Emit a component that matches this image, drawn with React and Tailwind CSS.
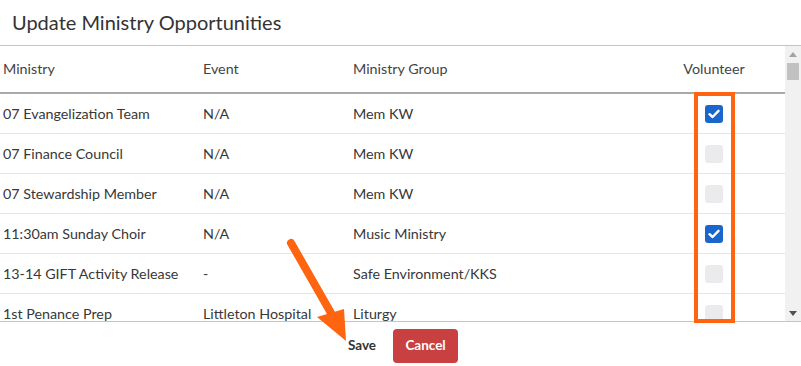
import React from 'react';

const rows = [
  { ministry: "07 Evangelization Team", event: "N/A", group: "Mem KW", checked: true },
  { ministry: "07 Finance Council", event: "N/A", group: "Mem KW", checked: false },
  { ministry: "07 Stewardship Member", event: "N/A", group: "Mem KW", checked: false },
  { ministry: "11:30am Sunday Choir", event: "N/A", group: "Music Ministry", checked: true },
  { ministry: "13-14 GIFT Activity Release", event: "-", group: "Safe Environment/KKS", checked: false },
  { ministry: "1st Penance Prep", event: "Littleton Hospital", group: "Liturgy", checked: false },
];

function Checkbox({ checked }) {
  if (checked) {
    return (
      <div className="w-[18px] h-[18px] rounded-[3px] bg-[#1a66cc] flex items-center justify-center">
        <svg width="12" height="10" viewBox="0 0 12 10">
          <path d="M1.5 5.2 L4.6 8 L10.5 1.8" fill="none" stroke="white" strokeWidth="2.4" strokeLinecap="round" strokeLinejoin="round" />
        </svg>
      </div>
    );
  }
  return <div className="w-[18px] h-[18px] rounded-[3px] bg-[#ebebed]" />;
}

export default function App() {
  return (
    <div className="relative w-[801px] h-[366px] bg-white overflow-hidden text-[#333]" style={{ fontFamily: 'Lato, "Open Sans", sans-serif' }}>
      {/* Title */}
      <div className="h-[46px] flex items-center pl-[12px] pb-[1px] text-[20px] text-[#333] border-b border-[#c4c4c4]">
        Update Ministry Opportunities
      </div>

      {/* Table + scrollbar */}
      <div className="flex h-[276px] border-b border-[#c4c4c4]">
        <div className="flex-1 overflow-hidden">
          <div className="flex items-center h-[48px] border-b-2 border-[#a9a9a9] text-[14.3px] text-[#444]">
            <div className="w-[203px] pl-[3px]">Ministry</div>
            <div className="w-[150px]">Event</div>
            <div className="w-[300px]">Ministry Group</div>
            <div className="w-[122px] text-center">Volunteer</div>
          </div>
          {rows.map((row) => (
            <div key={row.ministry} className="flex items-center h-[40px] border-b border-[#e6e6e6] text-[14.3px] text-[#383838]">
              <div className="w-[203px] pl-[3px]">{row.ministry}</div>
              <div className="w-[150px]">{row.event}</div>
              <div className="w-[300px]">{row.group}</div>
              <div className="w-[122px] flex justify-center">
                <Checkbox checked={row.checked} />
              </div>
            </div>
          ))}
        </div>
        <div className="w-[16px] bg-[#f1f1f1] flex flex-col items-center">
          <div className="h-[16px] flex items-center justify-center">
            <svg width="8" height="5" viewBox="0 0 8 5"><path d="M0 5 L4 0 L8 5 Z" fill="#a3a3a3" /></svg>
          </div>
          <div className="w-[12px] h-[17px] bg-[#c1c1c1] mt-[1px]" />
          <div className="flex-1" />
          <div className="h-[16px] flex items-center justify-center">
            <svg width="8" height="5" viewBox="0 0 8 5"><path d="M0 0 L4 5 L8 0 Z" fill="#505050" /></svg>
          </div>
        </div>
      </div>

      {/* Footer */}
      <div className="flex items-center justify-center h-[44px] gap-[17px] pl-[5px] pt-[3px]">
        <span className="text-[13.5px] font-bold text-[#333]">Save</span>
        <button className="h-[34px] w-[65px] rounded-[4px] bg-[#c8403f] text-white text-[13.5px] font-bold">Cancel</button>
      </div>

      {/* Annotation: orange box */}
      <div className="absolute left-[694px] top-[92px] w-[41px] h-[231px] border-[4px] border-[#ff6410]" />

      {/* Annotation: arrow */}
      <svg className="absolute left-0 top-0 pointer-events-none" width="801" height="366">
        <line x1="291" y1="243" x2="335" y2="320" stroke="#ff6410" strokeWidth="8" strokeLinecap="round" />
        <path d="M317 317 L344 309 L346 341 Z" fill="#ff6410" />
      </svg>
    </div>
  );
}
